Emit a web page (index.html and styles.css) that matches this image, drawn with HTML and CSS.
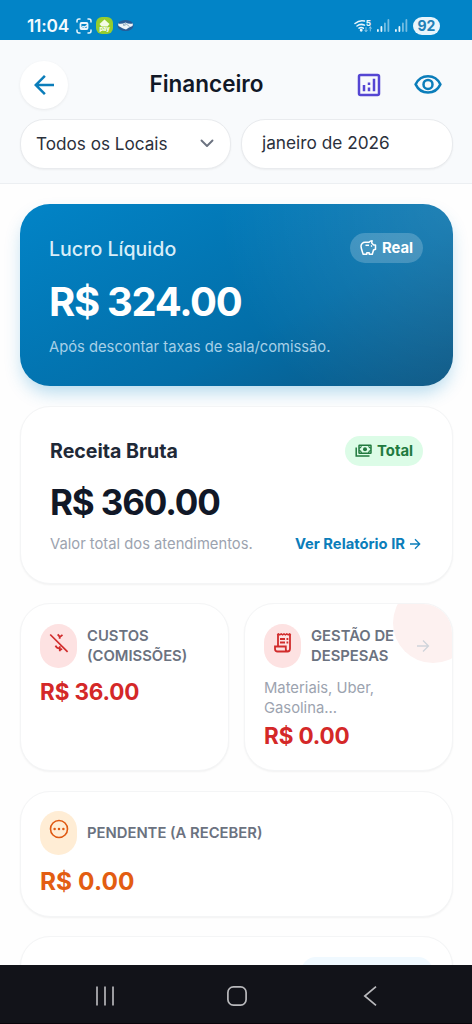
FILE: index.html
```html
<!DOCTYPE html>
<html lang="pt-BR">
<head>
<meta charset="utf-8">
<title>Financeiro</title>
<link rel="stylesheet" href="styles.css">
</head>
<body>
<div class="phone">
  <div class="status">
    <span class="time">11:04</span>
    <svg class="s-shot" width="16" height="16" viewBox="0 0 16 16" fill="none" stroke="#e8f5fc" stroke-width="1.5" stroke-linecap="round"><path d="M1 4V3q0-2 2-2h1M12 1h1q2 0 2 2v1M15 12v1q0 2-2 2h-1M4 15H3q-2 0-2-2v-1"/><rect x="4.5" y="5" width="7" height="6" rx="1" stroke-width="1.8"/><path d="M5 10l2-1.5 1.500.7 2.500-1.700"/></svg>
    <svg class="s-pay" width="17" height="17" viewBox="0 0 17 17"><rect width="17" height="17" rx="6" fill="#95cd2f"/><path d="M8.500 2.500l5 4.500-2 2.500h-6l-2-2.500z" fill="#f4fbe5"/><text x="8.500" y="13.700" text-anchor="middle" font-family="Inter, sans-serif" font-weight="800" font-size="5.500" fill="#fff">pay</text></svg>
    <svg class="s-hand" width="17" height="13" viewBox="0 0 17 13"><ellipse cx="8.500" cy="6.500" rx="8" ry="5.500" fill="#285b96"/><path d="M1 4.500q4 1 7.500-1 3.500 2 7.500 1l-.5 2.500-3.500 1.500-3 2-3-1-4.500-2.500z" fill="#eef4f8"/><path d="M6 6l2.500-1.500 4 3M6 6q2 1 3-.5" fill="none" stroke="#6d8fac" stroke-width=".7"/></svg>
    <span class="grow"></span>
    <svg class="s-wifi" width="19" height="14" viewBox="0 0 19 14" fill="none" stroke="#e8f5fc" stroke-width="1.500" stroke-linecap="round"><path d="M1 4.500Q5.500.6 10.500 2M3 7q3.500-2.800 7.500-.8M5 9.200q2.200-1.500 4.300 0"/><circle cx="7.200" cy="11.200" r=".7" fill="#e8f5fc"/><path d="M12 12.500V8.500m-1.300 2.700l1.300 1.300 1.300-1.300M16.300 12V8m-1.300 1.300L16.300 8l1.300 1.300" stroke-width=".9" opacity=".6"/><text x="11.700" y="6.700" font-family="Inter, sans-serif" font-weight="800" font-size="8" fill="#e8f5fc" stroke="none">5</text></svg>
    <svg class="s-sig" width="13" height="13" viewBox="0 0 13 13" fill="#e8f5fc"><rect x="0" y="10" width="1.800" height="3" rx=".9"/><rect x="3.500" y="7" width="1.800" height="6" rx=".9"/><rect x="7" y="3.500" width="1.800" height="9.500" rx=".9" opacity=".5"/><rect x="10.500" y="0" width="1.800" height="13" rx=".9" opacity=".5"/></svg>
    <svg class="s-sig2" width="13" height="13" viewBox="0 0 13 13" fill="#e8f5fc"><rect x="0" y="10" width="1.800" height="3" rx=".9"/><rect x="3.500" y="7" width="1.800" height="6" rx=".9"/><rect x="7" y="3.500" width="1.800" height="9.500" rx=".9" opacity=".5"/><rect x="10.500" y="0" width="1.800" height="13" rx=".9" opacity=".5"/></svg>
    <span class="battery">92</span>
  </div>

  <header class="header">
    <div class="bar">
      <button class="back"><svg width="30" height="30" viewBox="0 -960 960 960" fill="#0b7dba"><path d="M313-440l224 224-57 56-320-320 320-320 57 56-224 224h487v80H313Z"/></svg></button>
      <h1 class="title">Financeiro</h1>
      <div class="actions">
        <svg width="30" height="30" viewBox="0 0 24 24"><rect x="4" y="4" width="16" height="16" rx="1.200" fill="none" stroke="#5546d3" stroke-width="2"/><path d="M7 12h2v5H7zM15 7h2v10h-2zM11 14h2v3h-2zM11 10h2v2h-2z" fill="#5546d3"/></svg>
        <svg width="30" height="30" viewBox="0 0 24 24" fill="none" stroke="#0b7dba" stroke-width="2"><path d="M2.100 11.500C4 7.500 7.700 5 12 5s8 2.500 9.900 6.500C20 15.500 16.300 18 12 18s-8-2.500-9.900-6.500z"/><circle cx="12" cy="11.500" r="3.600"/></svg>
      </div>
    </div>
    <div class="filters">
      <div class="field local"><span>Todos os Locais</span><svg width="14" height="9" viewBox="0 0 14 9" fill="none" stroke="#6b7280" stroke-width="1.900" stroke-linecap="round" stroke-linejoin="round"><path d="M1.500 1.500L7 7l5.500-5.500"/></svg></div>
      <div class="field month"><span>janeiro de 2026</span></div>
    </div>
  </header>

  <main class="content">
    <section class="profit">
      <div class="top"><h2 class="profit-name">Lucro Líquido</h2>
        <span class="chip real"><svg width="17" height="16" viewBox="0 0 17 16" fill="none" stroke="#fff" stroke-width="1.500" stroke-linejoin="round"><path d="M3.200 14.200C2 10.700 1 8.300 1 6.300a4 4 0 0 1 4-4h4q1.300-1.500 3.100-1.500L11.700 3l2 2h1.800v4.200l-2 .8-1.200 4.200H9.200v-1.500H6.800v1.500z"/><path d="M5.500 5.300H9"/><circle cx="11.500" cy="6" r=".5" fill="#fff" stroke-width=".8"/></svg>Real</span></div>
      <div class="profit-value">R$ 324.00</div>
      <p class="profit-note">Após descontar taxas de sala/comissão.</p>
    </section>

    <section class="card gross">
      <div class="top"><h2 class="gross-name">Receita Bruta</h2>
        <span class="chip total"><svg width="17" height="14" viewBox="0 0 17 14" fill="none" stroke="#217a3f" stroke-width="1.500"><rect x="4" y="1.300" width="12" height="8" rx=".5"/><circle cx="10" cy="5.300" r="2" fill="#217a3f" stroke="none"/><path d="M4 4.200q2.300-.4 2.600-2.900M16 4.200q-2.300-.4-2.600-2.900M4 6.400q2.300.4 2.600 2.900M16 6.400q-2.300.4-2.600 2.900" stroke-width="1.100"/><path d="M1.200 3.500v8.600h13.300"/></svg>Total</span></div>
      <div class="gross-value">R$ 360.00</div>
      <div class="gross-foot"><span class="muted">Valor total dos atendimentos.</span><a class="link">Ver Relatório IR<svg width="12" height="12" viewBox="0 0 12 12" fill="none" stroke="#0b7dba" stroke-width="1.300"><path d="M1 6h9.500M6 1.300L10.700 6 6 10.700"/></svg></a></div>
    </section>

    <div class="pair">
      <section class="card small">
        <div class="head"><span class="pill red"><svg width="20" height="20" viewBox="0 0 20 20" fill="none" stroke="#d12c2c" stroke-width="1.700"><path d="M1.200 1.500L18.600 18.900"/><path d="M8.700 1.400l2.200 2.500 2.600-2M10.700 3.300v2.500M6.500 12.700q1.500 3 4.200 2.700M10.800 13.300v5M13.200 16l-1.800.6" stroke-width="1.800"/></svg></span><h3 class="label">CUSTOS<br>(COMISSÕES)</h3></div>
        <div class="value red-text">R$ 36.00</div>
      </section>
      <section class="card small">
        <span class="blob"></span>
        <div class="head"><span class="pill red"><svg width="18" height="20" viewBox="0 0 18 20" fill="none" stroke="#d12c2c" stroke-width="1.800"><path d="M4 13.500V2M16 2v13.500q0 3-2.500 3H3.500Q1 18.500 1 16v-2.500h10.800v2.700q0 2.300 2.200 2.300" /><path d="M3.200 1.900l1.200-1 1.400 1 1.400-1 1.400 1 1.400-1 1.400 1 1.400-1 1.400 1 1.400-1 1.200 1" stroke-width="1.500"/><path d="M6 6h5M6 9.500h5M12.500 6h1.800M12.500 9.500h1.800"/></svg></span><h3 class="label">GESTÃO DE<br>DESPESAS</h3><svg class="go" width="14" height="14" viewBox="0 0 14 14" fill="none" stroke="#cfd4da" stroke-width="1.300"><path d="M1 7h11M7 1.500L12.500 7 7 12.500"/></svg></div>
        <p class="desc">Materiais, Uber,<br>Gasolina...</p>
        <div class="value red-text second">R$ 0.00</div>
      </section>
    </div>

    <section class="card small pending">
      <div class="head"><span class="pill orange"><svg width="20" height="20" viewBox="0 0 20 20" fill="none" stroke="#df5a13" stroke-width="1.600"><circle cx="10" cy="10" r="8.500"/><g fill="#df5a13" stroke="none"><circle cx="5.600" cy="10" r="1.250"/><circle cx="10" cy="10" r="1.250"/><circle cx="14.400" cy="10" r="1.250"/></g></svg></span><h3 class="label">PENDENTE (A RECEBER)</h3></div>
      <div class="value orange-text">R$ 0.00</div>
    </section>

    <section class="card peek"><span class="peek-chip"></span></section>
  </main>

  <nav class="nav">
    <svg width="20" height="20" viewBox="0 0 20 20" stroke="#b5b5b8" stroke-width="1.700"><path d="M2 .5v19M10 .5v19M18 .5v19"/></svg>
    <svg class="home" width="20" height="20" viewBox="0 0 20 20" fill="none" stroke="#b9b9bc" stroke-width="1.700"><rect x=".9" y=".9" width="18.200" height="18.200" rx="5.500"/></svg>
    <svg width="20" height="20" viewBox="0 0 20 20" fill="none" stroke="#b9b9bc" stroke-width="1.700"><path d="M16 .7L4.800 10 16 19.300"/></svg>
  </nav>
</div>
</body>
</html>
```
FILE: styles.css
```css
* { box-sizing: border-box; margin: 0; padding: 0; }
body { font-family: Inter, "Liberation Sans", sans-serif; background: #fefefe; color: #111827; }
svg { display: block; flex: none; }
.phone { width: 472px; height: 1024px; display: flex; flex-direction: column; overflow: hidden; }

.status { height: 40px; flex: none; display: flex; align-items: center; padding: 11px 32px 0 27px; background: #0284c7; }
.time { font-size: 17.300px; font-weight: 600; line-height: 20px; color: #f3fafe; width: 49px; letter-spacing: -.2px; }
.s-pay { margin-left: 4px; }
.s-hand { margin-left: 4px; }
.grow { flex: 1; }
.s-sig { margin-left: 4px; }
.s-sig2 { margin-left: 5px; }
.battery { width: 27px; height: 18px; margin-left: 5px; border-radius: 9px; background: #e8f5fc; color: #2380b6; font-size: 14px; line-height: 18px; font-weight: 700; text-align: center; }

.header { height: 144px; flex: none; padding: 21px 19px 0 20px; background: #f8fafc; border-bottom: 1px solid #eceff2; }
.bar { display: flex; align-items: center; height: 48px; }
.back { width: 48px; height: 48px; border: 0; border-radius: 50%; background: #fff; box-shadow: 0 1px 3px rgba(0,0,0,.07); display: flex; align-items: center; justify-content: center; }
.title { width: 277px; text-align: center; font-size: 22.500px; font-weight: 600; line-height: 28px; padding-bottom: 3px; }
.actions { display: flex; gap: 29px; margin-left: 9px; }
.filters { display: grid; grid-template-columns: 211px 212px; gap: 10px; margin-top: 10px; }
.field { height: 50px; border: 1px solid #e9ebee; border-radius: 24px; background: #fff; box-shadow: 0 1px 2px rgba(0,0,0,.05); display: flex; align-items: center; justify-content: space-between; padding: 0 16px 0 15px; font-size: 17.150px; color: #2b303b; }
.local { padding-bottom: 2px; }
.month { padding: 0 20px 3px; font-size: 17.250px; }

.content { flex: 1; min-height: 0; overflow: hidden; padding: 20px 19px 0 20px; }
.profit { height: 182px; border-radius: 30px; padding: 29px 30px 0 29px; background: radial-gradient(circle at 100% 0, rgba(255,255,255,.12), transparent 50%), linear-gradient(152deg, #0284c7 0%, #036ea8 62%, #0c5784 100%); box-shadow: 0 9px 18px -3px rgba(2,132,199,.3); color: #fff; }
.top { display: flex; justify-content: space-between; align-items: center; height: 30px; }
.profit-name { font-size: 19.600px; font-weight: 500; color: #d8edf8; padding-top: 1px; }
.chip { display: flex; align-items: center; gap: 5px; height: 30px; padding: 0 10px; border-radius: 15px; font-size: 14.800px; font-weight: 700; }
.real { background: rgba(255,255,255,.2); }
.profit-value { font-size: 40px; line-height: 50px; font-weight: 700; letter-spacing: -1.300px; margin-top: 14px; }
.profit-note { font-size: 14.750px; line-height: 20px; color: #a7d0e7; margin-top: 10px; }

.card { background: #fff; border: 1px solid #f4f5f6; border-radius: 30px; box-shadow: 0 1px 2px rgba(0,0,0,.05); }
.gross { height: 178px; margin-top: 20px; padding: 29px; }
.gross-name { font-size: 19.600px; font-weight: 700; color: #1f2937; }
.total { background: #dcfce7; color: #217a3f; }
.gross-value { font-size: 35px; line-height: 44px; font-weight: 700; letter-spacing: -1.150px; margin-top: 14px; }
.gross-foot { display: flex; justify-content: space-between; align-items: center; height: 20px; margin-top: 10px; font-size: 14.750px; padding-right: 2px; }
.muted { color: #9ca3af; }
.link { display: flex; align-items: center; gap: 4px; color: #0b7dba; font-weight: 700; }
.pair { display: grid; grid-template-columns: 209px 209px; gap: 15px; margin-top: 19px; }
.small { position: relative; overflow: hidden; padding: 20px 19px 0; }
.pair .small { height: 168px; }
.head { display: flex; align-items: center; height: 44px; gap: 10px; position: relative; }
.pill { flex: none; width: 37px; height: 44px; border-radius: 19px; display: flex; justify-content: center; padding-top: 9px; }
.red { background: #fde2e2; }
.orange { background: #ffedd5; padding-top: 8px; }
.label { font-size: 14.800px; line-height: 20px; font-weight: 600; color: #6b7280; white-space: nowrap; }
.value { font-size: 22.500px; line-height: 28px; font-weight: 700; margin-top: 10px; letter-spacing: -.15px; }
.red-text { color: #d42828; }
.orange-text { color: #e35d12; }
.go { margin-left: 12px; }
.blob { position: absolute; right: -21px; top: -21px; width: 80px; height: 80px; border-radius: 40px; background: #fdf1f0; }
.desc { font-size: 14.800px; line-height: 20px; color: #9ca3af; margin-top: 10px; }
.second { margin-top: 4px; }
.pending { height: 126px; margin-top: 20px; padding-top: 19px; }
.pending .value { margin-top: 12px; font-size: 24.400px; letter-spacing: .1px; }
.peek { height: 80px; margin-top: 19px; padding: 20px 19px 0; display: flex; justify-content: flex-end; }
.peek-chip { width: 132px; height: 30px; border-radius: 15px; background: #f0f9ff; }

.nav { height: 59px; flex: none; background: #121319; border-bottom: 1px solid #09050a; display: flex; justify-content: space-between; align-items: center; padding: 3px 92px 0 95px; }
.home { margin-right: 2px; }
```
